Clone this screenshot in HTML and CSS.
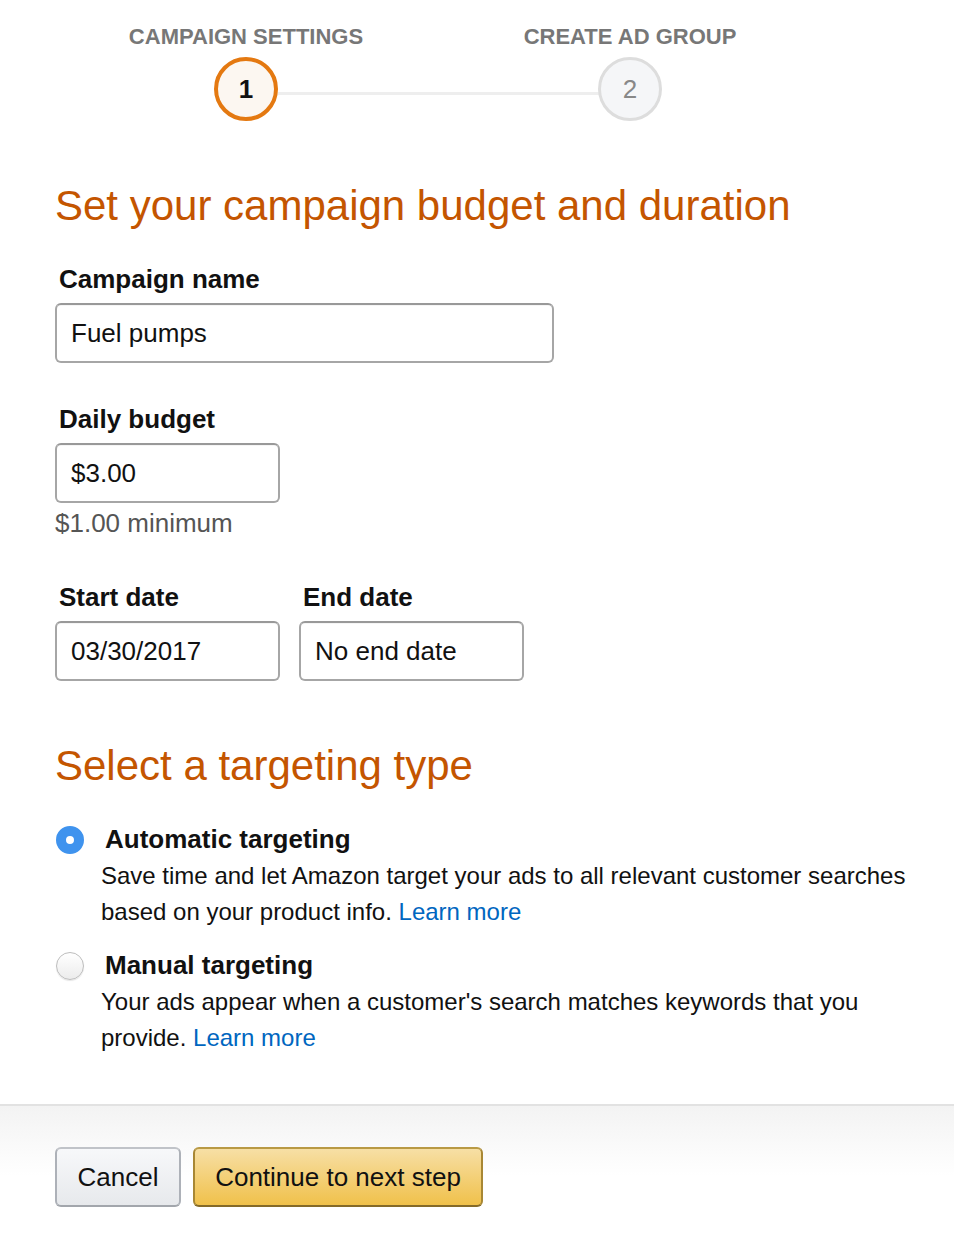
FILE: index.html
```html
<!DOCTYPE html>
<html>
<head>
<meta charset="utf-8">
<link rel="stylesheet" href="styles.css">
</head>
<body>
<div class="page">
  <div class="stepper">
    <div class="step step-active">
      <div class="step-label">CAMPAIGN SETTINGS</div>
      <div class="step-circle">1</div>
    </div>
    <div class="step step-next">
      <div class="step-label">CREATE AD GROUP</div>
      <div class="step-circle">2</div>
    </div>
  </div>

  <div class="content">
    <h1 class="section-title">Set your campaign budget and duration</h1>

    <div class="field">
      <label class="field-label">Campaign name</label>
      <div class="input input-wide">Fuel pumps</div>
    </div>

    <div class="field field-budget">
      <label class="field-label">Daily budget</label>
      <div class="input input-narrow">$3.00</div>
      <div class="hint">$1.00 minimum</div>
    </div>

    <div class="field-row">
      <div class="field">
        <label class="field-label">Start date</label>
        <div class="input input-narrow">03/30/2017</div>
      </div>
      <div class="field">
        <label class="field-label">End date</label>
        <div class="input input-narrow">No end date</div>
      </div>
    </div>

    <h1 class="section-title section-title-2">Select a targeting type</h1>

    <div class="option">
      <span class="radio radio-on"></span>
      <div class="option-body">
        <div class="option-title">Automatic targeting</div>
        <p class="option-desc">Save time and let Amazon target your ads to all relevant customer searches based on your product info. <a class="link">Learn more</a></p>
      </div>
    </div>

    <div class="option option-2">
      <span class="radio"></span>
      <div class="option-body">
        <div class="option-title">Manual targeting</div>
        <p class="option-desc">Your ads appear when a customer's search matches keywords that you provide. <a class="link">Learn more</a></p>
      </div>
    </div>
  </div>

  <div class="footer">
    <button class="btn btn-cancel">Cancel</button>
    <button class="btn btn-primary">Continue to next step</button>
  </div>
</div>
</body>
</html>
```

FILE: styles.css
```css
* { box-sizing: border-box; }
html, body { margin: 0; padding: 0; background: #fff; }
body {
  font-family: "Liberation Sans", Arial, Helvetica, sans-serif;
  color: #111;
  width: 954px;
}
.page { display: flex; flex-direction: column; min-height: 1236px; }

/* Stepper */
.stepper {
  position: relative;
  display: flex;
  gap: 84px;
  padding: 24px 0 0 96px;
}
.stepper::before {
  content: "";
  position: absolute;
  left: 278px;
  width: 322px;
  top: 92px;
  height: 3px;
  background: #eeeeee;
}
.step {
  position: relative;
  width: 300px;
  display: flex;
  flex-direction: column;
  align-items: center;
}
.step-label {
  font-size: 22px;
  line-height: 25px;
  font-weight: bold;
  color: #777;
  white-space: nowrap;
}
.step-circle {
  margin-top: 8px;
  width: 64px;
  height: 64px;
  border-radius: 50%;
  display: flex;
  align-items: center;
  justify-content: center;
  font-size: 26px;
}
.step-active .step-circle {
  border: 4px solid #e47911;
  background: #fcf7f1;
  font-weight: bold;
  color: #111;
}
.step-next .step-circle {
  border: 3px solid #dddddd;
  background: #f5f6f8;
  color: #888;
}

/* Content */
.content { padding: 0 0 0 55px; flex: 1; }
.section-title {
  margin: 60px 0 0 0;
  font-size: 42px;
  line-height: 50px;
  font-weight: normal;
  color: #c45500;
}
.section-title-2 { margin-top: 60px; }

.field { display: flex; flex-direction: column; margin-top: 33px; }
.field-budget { margin-top: 41px; }
.field-label {
  font-size: 26px;
  line-height: 30px;
  font-weight: bold;
  padding-left: 4px;
  color: #111;
}
.input {
  margin-top: 9px;
  height: 60px;
  border: 2px solid #a6a6a6;
  border-top-color: #999;
  border-radius: 6px;
  padding: 0 14px;
  display: flex;
  align-items: center;
  font-size: 26px;
  color: #111;
  box-shadow: inset 0 1px 0 rgba(0,0,0,0.04);
}
.input-wide { width: 499px; }
.input-narrow { width: 225px; }
.hint {
  margin-top: 5px;
  font-size: 26px;
  line-height: 30px;
  color: #555;
}
.field-row { display: flex; gap: 19px; margin-top: 44px; }
.field-row .field { margin-top: 0; }

/* Options */
.option { display: flex; margin-top: 33px; }
.option-2 { margin-top: 20px; }
.radio {
  flex: none;
  width: 28px;
  height: 28px;
  margin: 2px 17px 0 1px;
  border-radius: 50%;
  border: 1px solid #bdbdbd;
  background: linear-gradient(#ffffff, #ececec);
  box-shadow: 0 1px 1px rgba(0,0,0,0.1);
}
.radio-on {
  border: 10px solid #3f93ee;
  background: #fff;
  box-shadow: none;
}
.option-body { width: 830px; }
.option-title {
  font-size: 26px;
  line-height: 30px;
  font-weight: bold;
  padding-left: 4px;
}
.option-desc {
  margin: 4px 0 0 0;
  font-size: 24px;
  line-height: 36px;
  color: #111;
}
.link { color: #0066c0; text-decoration: none; }

/* Footer */
.footer {
  margin-top: 47px;
  border-top: 2px solid #e2e2e2;
  background: linear-gradient(#f3f3f3, #ffffff 70px);
  padding: 41px 0 29px 55px;
  display: flex;
  gap: 12px;
}
.btn {
  height: 60px;
  border-radius: 6px;
  font-family: inherit;
  font-size: 26px;
  color: #111;
  padding: 0;
  cursor: pointer;
}
.btn-cancel {
  width: 126px;
  border: 2px solid #adb1b8;
  border-top-color: #c0c3c8;
  border-bottom-color: #a2a6ac;
  background: linear-gradient(#f7f8fa, #e7e9ec);
}
.btn-primary {
  width: 290px;
  border: 2px solid #a88734;
  border-top-color: #b99a45;
  border-bottom-color: #846a29;
  background: linear-gradient(#f7dfa5, #f0c14b);
}
```
